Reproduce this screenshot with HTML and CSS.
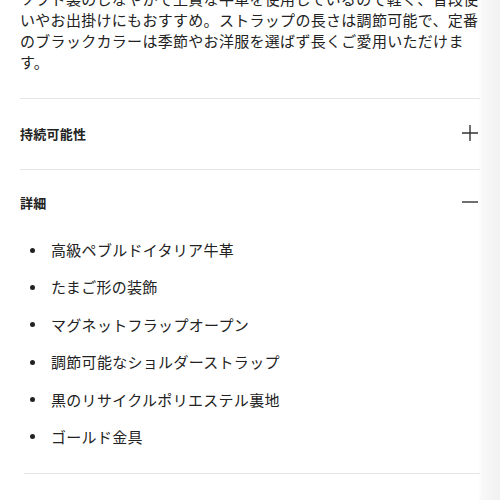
FILE: index.html
```html
<!DOCTYPE html>
<html lang="ja">
<head>
<meta charset="utf-8">
<link rel="stylesheet" href="styles.css">
</head>
<body>
<div class="page">
  <p class="desc">ソフト製のしなやかで上質な牛革を使用しているので軽く、普段使いやお出掛けにもおすすめ。ストラップの長さは調節可能で、定番のブラックカラーは季節やお洋服を選ばず長くご愛用いただけます。</p>

  <section class="acc">
    <div class="acc-head">
      <h3 class="acc-title">持続可能性</h3>
      <svg class="icon" width="16" height="16" viewBox="0 0 16 16"><path d="M0 8H16M8 0V16" stroke="#333" stroke-width="1.4" fill="none"/></svg>
    </div>
  </section>

  <section class="acc open">
    <div class="acc-head">
      <h3 class="acc-title">詳細</h3>
      <svg class="icon" width="16" height="16" viewBox="0 0 16 16"><path d="M0 8H16" stroke="#333" stroke-width="1.4" fill="none"/></svg>
    </div>
    <ul class="details">
      <li>高級ペブルドイタリア牛革</li>
      <li>たまご形の装飾</li>
      <li>マグネットフラップオープン</li>
      <li>調節可能なショルダーストラップ</li>
      <li>黒のリサイクルポリエステル裏地</li>
      <li>ゴールド金具</li>
    </ul>
  </section>
  <div class="end-rule"></div>
</div>
<div class="edge"></div>
</body>
</html>
```

FILE: styles.css
```css
html, body {
  margin: 0;
  padding: 0;
  background: #ffffff;
  overflow: hidden;
}
body {
  font-family: "Noto Sans CJK JP", "Noto Sans", sans-serif;
  color: #222222;
}
.page {
  padding: 0 20px;
  margin-top: -12px;
}
.desc {
  margin: 0 0 26px;
  font-size: 15px;
  line-height: 21px;
  letter-spacing: 0.02em;
}
.acc {
  border-top: 1px solid #e6e6e6;
}
.acc-head {
  height: 70px;
  display: flex;
  align-items: center;
  justify-content: space-between;
  padding-right: 2px;
}
.acc.open .acc-head {
  height: 66px;
}
.acc-title {
  margin: 0 0 2px;
  font-size: 13px;
  font-weight: 700;
  letter-spacing: 0.02em;
  color: #222222;
}
.icon {
  display: block;
  margin-bottom: 2px;
}
.details {
  list-style: none;
  margin: 0;
  padding: 3px 0 25px 10px;
  display: flex;
  flex-direction: column;
  gap: 15.4px;
}
.details li {
  display: flex;
  align-items: center;
  font-size: 15px;
  line-height: 22px;
  letter-spacing: 0.02em;
}
.details li::before {
  content: "";
  width: 5px;
  height: 5px;
  border-radius: 50%;
  background: #222222;
  margin-right: 16px;
  flex: none;
}
.end-rule {
  margin-left: 4px;
  border-top: 1px solid #e6e6e6;
}
.edge {
  position: fixed;
  top: 0;
  right: 0;
  width: 22px;
  height: 100%;
  background: linear-gradient(to right, rgba(248,248,248,0) 0, #f8f8f8 4px, #f1f1f1 22px);
}
```
